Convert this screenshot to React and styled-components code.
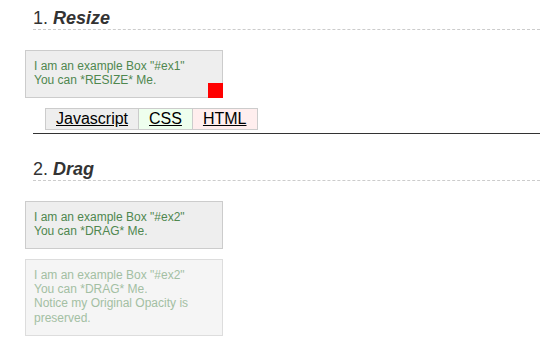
import React from "react";
import styled, { createGlobalStyle } from "styled-components";

const GlobalStyle = createGlobalStyle`
    body {
        margin: 0;
        background: #fff;
        font-family: "Liberation Sans", Arial, sans-serif;
    }
`;

const Page = styled.div`
    padding: 8px 0 0 25px;
`;

const Section = styled.section`
    margin-bottom: 25px;
    &:last-child {
        margin-bottom: 0;
    }
`;

const Heading = styled.h2`
    margin: 0 0 20px 8px;
    padding-bottom: 1px;
    font-size: 18px;
    line-height: 20px;
    font-weight: normal;
    color: #333;
    border-bottom: 1px dashed #ccc;

    em {
        font-weight: bold;
    }
`;

const Box = styled.div`
    position: relative;
    box-sizing: border-box;
    width: 198px;
    padding: 8px 8px ${(p) => (p.$faded ? "10px" : "9px")};
    margin-bottom: 10px;
    font-size: 12px;
    line-height: 14.4px;
    color: ${(p) => (p.$faded ? "#a3bfa3" : "#4f874f")};
    background: ${(p) => (p.$faded ? "#f5f5f5" : "#eee")};
    border: 1px solid ${(p) => (p.$faded ? "#ddd" : "#ccc")};
    &:last-child {
        margin-bottom: 0;
    }
`;

const Handle = styled.span`
    position: absolute;
    right: -1px;
    bottom: -1px;
    width: 15px;
    height: 15px;
    background: #f00;
`;

const TabStrip = styled.div`
    display: flex;
    margin: 0 0 0 8px;
    padding: 0 0 3px 12px;
    border-bottom: 1px solid #333;
`;

const Tab = styled.a`
    display: block;
    padding: 0 10px;
    font-size: 16px;
    line-height: 20px;
    color: #000;
    text-decoration: underline;
    background: ${(p) => p.$bg};
    border: 1px solid #ccc;
    & + & {
        margin-left: -1px;
    }
`;

export default function App() {
    return (
        <>
            <GlobalStyle />
            <Page>
                <Section>
                    <Heading>
                        1. <em>Resize</em>
                    </Heading>
                    <Box>
                        I am an example Box "#ex1"
                        <br />
                        You can *RESIZE* Me.
                        <Handle />
                    </Box>
                    <TabStrip>
                        <Tab $bg="#eee">Javascript</Tab>
                        <Tab $bg="#efe">CSS</Tab>
                        <Tab $bg="#fee">HTML</Tab>
                    </TabStrip>
                </Section>
                <Section>
                    <Heading>
                        2. <em>Drag</em>
                    </Heading>
                    <Box>
                        I am an example Box "#ex2"
                        <br />
                        You can *DRAG* Me.
                    </Box>
                    <Box $faded>
                        I am an example Box "#ex2"
                        <br />
                        You can *DRAG* Me.
                        <br />
                        Notice my Original Opacity is preserved.
                    </Box>
                </Section>
            </Page>
        </>
    );
}
